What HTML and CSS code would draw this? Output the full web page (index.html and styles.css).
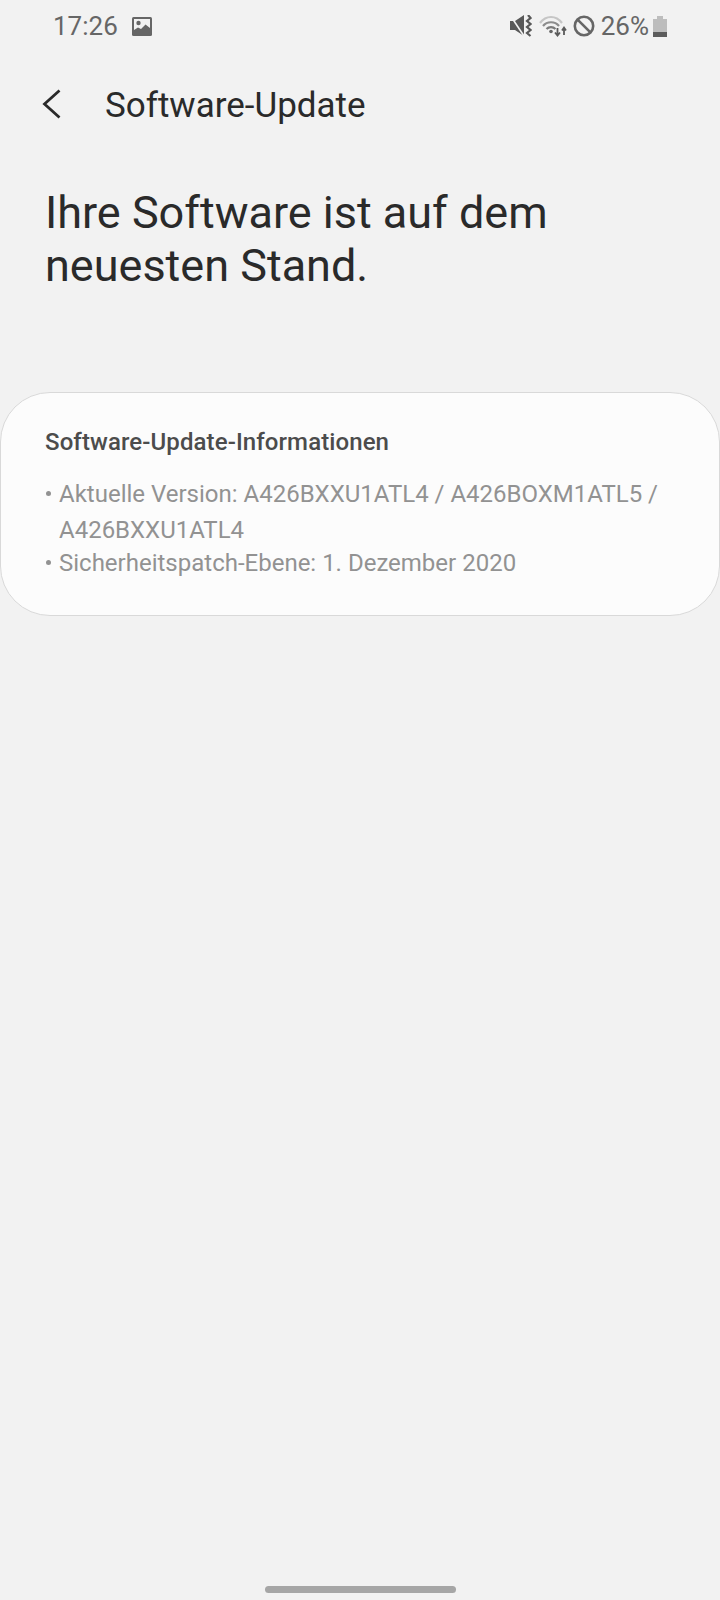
FILE: index.html
```html
<!DOCTYPE html>
<html lang="de">
<head>
<meta charset="UTF-8">
<title>Software-Update</title>
<link rel="stylesheet" href="styles.css">
</head>
<body>
<div class="screen">
    <div class="status">
        <div class="status-left">
            <span class="time">17:26</span>
            <svg class="pic" width="20" height="19" viewBox="0 0 20 19">
                <rect width="20" height="19" rx="1.5" fill="#666"/>
                <rect x="2" y="2" width="16" height="15" fill="#f2f2f2"/>
                <circle cx="6.5" cy="6" r="2.2" fill="#666"/>
                <path d="M2 13 L6 10.5 L9 12 L13.5 7.5 L18 11 V17 H2 Z" fill="#666"/>
            </svg>
        </div>
        <div class="status-right">
            <svg width="22" height="22" viewBox="0 0 22 22">
                <path d="M0 6 H5 L14 0 V21 L5 15 H0 Z" fill="#585858"/>
                <path d="M0 0 L14 21" stroke="#f2f2f2" stroke-width="1.6"/>
                <path d="M18 0 L20.5 3 L17 6 L20.5 9 L17 12 L20.5 15 L17 18 L20.5 21" fill="none" stroke="#585858" stroke-width="2.2"/>
            </svg>
            <svg class="wifi" width="28" height="22" viewBox="0 0 28 22">
                <path d="M1 8 C7 0 17 0 23 8" fill="none" stroke="#c6c6c6" stroke-width="2.2"/>
                <path d="M4 11 C8 6 16 6 20 11" fill="none" stroke="#8c8c8c" stroke-width="2.2"/>
                <path d="M7.5 14 C10 11.5 14 11.5 16.5 14" fill="none" stroke="#7a7a7a" stroke-width="2.2"/>
                <circle cx="12" cy="16.5" r="1.8" fill="#666"/>
                <path d="M18.5 13 V20 M16 17.5 L18.5 20.5 L21 17.5" fill="none" stroke="#5a5a5a" stroke-width="1.8"/>
                <path d="M25 20 V13 M23 15.5 L25 12.5 L27 15.5" fill="none" stroke="#5a5a5a" stroke-width="1.8"/>
            </svg>
            <svg class="block" width="22" height="22" viewBox="0 0 22 22">
                <circle cx="11" cy="11" r="9.2" fill="none" stroke="#666" stroke-width="2.6"/>
                <path d="M4.6 4.6 L17.4 17.4" stroke="#666" stroke-width="2.6"/>
            </svg>
            <span class="pct">26%</span>
            <svg class="batt" width="14" height="21" viewBox="0 0 14 21">
                <path d="M0 3 H4 V0 H10 V3 H14 V21 H0 Z" fill="#bdbdbd"/>
                <rect y="16" width="14" height="5" fill="#5c5c5c"/>
            </svg>
        </div>
    </div>

    <div class="topbar">
        <svg class="back" width="20" height="32" viewBox="0 0 20 32">
            <path d="M18.5 1.5 L3.5 15 L18.5 28.5" fill="none" stroke="#2a2a2a" stroke-width="2.8"/>
        </svg>
        <span class="title">Software-Update</span>
    </div>

    <h1 class="headline">Ihre Software ist auf dem neuesten Stand.</h1>

    <div class="card">
        <h3>Software-Update-Informationen</h3>
        <ul class="info">
            <li>Aktuelle Version: A426BXXU1ATL4 / A426BOXM1ATL5 / A426BXXU1ATL4</li>
            <li>Sicherheitspatch-Ebene: 1. Dezember 2020</li>
        </ul>
    </div>

    <div class="navbar"><div class="handle"></div></div>
</div>
</body>
</html>
```

FILE: styles.css
```css
body {
    margin: 0;
    background: #f2f2f2;
    font-family: Roboto, sans-serif;
}
.screen {
    width: 720px;
    height: 1600px;
    display: flex;
    flex-direction: column;
}
.status {
    height: 52px;
    display: flex;
    justify-content: space-between;
    align-items: center;
    padding: 0 53px 0 53px;
    color: #666;
    font-size: 26px;
}
.status-left, .status-right {
    display: flex;
    align-items: center;
}
.pic {
    margin-left: 14px;
}
.wifi {
    margin-left: 7px;
}
.block {
    margin-left: 6px;
}
.pct {
    margin-left: 6px;
}
.batt {
    margin-left: 4px;
}
.topbar {
    height: 106px;
    display: flex;
    align-items: center;
    padding-left: 41px;
}
.title {
    margin-left: 44px;
    font-size: 35px;
    color: #2a2a2a;
}
.headline {
    margin: 28px 150px 0 45px;
    font-size: 45px;
    font-weight: 400;
    line-height: 53px;
    color: #2a2a2a;
}
.card {
    margin-top: 100px;
    height: 224px;
    box-sizing: border-box;
    padding: 34px 44px 0;
    background: #fcfcfc;
    border: 1px solid #d9d9d9;
    border-radius: 50px;
}
.card h3 {
    margin: 0;
    font-size: 24px;
    font-weight: 500;
    line-height: 30px;
    color: #4c4c4c;
    letter-spacing: 0.1px;
}
.info {
    list-style: none;
    margin: 19px 0 0;
    padding: 0;
    font-size: 24px;
    line-height: 36px;
    color: #929292;
}
.info li {
    position: relative;
    padding-left: 14px;
}
.info li::before {
    content: "";
    position: absolute;
    left: 1px;
    top: 15px;
    width: 5px;
    height: 5px;
    border-radius: 50%;
    background: #929292;
}
.info li + li {
    margin-top: -3px;
}
.navbar {
    margin-top: auto;
    height: 14px;
    display: flex;
    justify-content: center;
}
.handle {
    width: 191px;
    height: 7px;
    border-radius: 4px;
    background: #a6a6a6;
}
```
